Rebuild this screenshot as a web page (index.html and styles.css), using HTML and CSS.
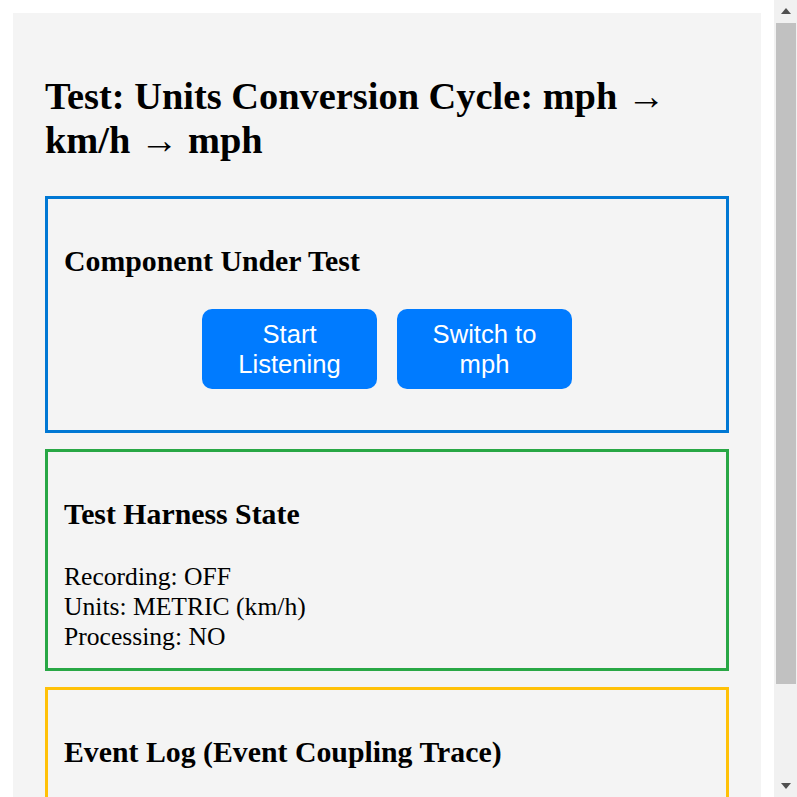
FILE: index.html
```html
<!DOCTYPE html>
<html lang="en">
<head>
<meta charset="utf-8">
<title>Units Conversion Cycle Test</title>
<link rel="stylesheet" href="styles.css">
</head>
<body>
<div class="page">
  <div class="container">
    <h1 class="title">Test: Units Conversion Cycle: mph → km/h → mph</h1>
    <section class="panel panel-component">
      <h2 class="panel-title">Component Under Test</h2>
      <div class="controls">
        <button class="btn">Start Listening</button>
        <button class="btn">Switch to mph</button>
      </div>
    </section>
    <section class="panel panel-state">
      <h2 class="panel-title">Test Harness State</h2>
      <div class="state">
        <div>Recording: OFF</div>
        <div>Units: METRIC (km/h)</div>
        <div>Processing: NO</div>
      </div>
    </section>
    <section class="panel panel-log">
      <h2 class="panel-title">Event Log (Event Coupling Trace)</h2>
      <div class="log"></div>
    </section>
  </div>
</div>
<div class="scrollbar" aria-hidden="true">
  <div class="sb-btn"><span class="arrow-up"></span></div>
  <div class="sb-track"><div class="sb-thumb"></div></div>
  <div class="sb-btn"><span class="arrow-down"></span></div>
</div>
</body>
</html>
```
FILE: styles.css
```css
html, body {
  margin: 0;
  padding: 0;
  height: 100%;
  overflow: hidden;
  background: #ffffff;
}
body {
  font-family: "Liberation Serif", "Times New Roman", serif;
  font-size: 25.6px;
  color: #000;
}
.page {
  margin-right: 23px;
}
.container {
  margin: 13px;
  padding: 32px;
  background: #f4f4f4;
}
.title {
  font-size: 38.4px;
  font-weight: bold;
  line-height: 1.15;
  margin: 29px 0 34px;
}
.panel {
  border: 3px solid #0078d4;
  padding: 16px;
}
.panel + .panel {
  margin-top: 16px;
}
.panel-component { border-color: #0078d4; }
.panel-state { border-color: #28a745; }
.panel-log { border-color: #ffc107; }
.panel-title {
  font-size: 29.8px;
  font-weight: bold;
  line-height: 34px;
  margin: 29px 0 31px;
}
.controls {
  display: flex;
  justify-content: center;
  gap: 20px;
  margin: 0 0 25px;
}
.btn {
  width: 175px;
  padding: 10px 16px;
  border: none;
  border-radius: 10px;
  background: #007bff;
  color: #fff;
  font-family: "Liberation Sans", Arial, sans-serif;
  font-size: 25.6px;
  line-height: 30px;
}
.state {
  line-height: 30px;
  margin-bottom: 0;
}
.log {
  height: 53px;
}

/* scrollbar drawn over the right edge */
.scrollbar {
  position: fixed;
  top: 0;
  right: 0;
  width: 23px;
  height: 100%;
  display: flex;
  flex-direction: column;
  background: #f1f1f1;
}
.sb-btn {
  height: 22px;
  flex: none;
  display: flex;
  align-items: center;
  justify-content: center;
}
.arrow-up {
  width: 0;
  height: 0;
  border-left: 5px solid transparent;
  border-right: 5px solid transparent;
  border-bottom: 6px solid #505050;
}
.arrow-down {
  width: 0;
  height: 0;
  border-left: 5px solid transparent;
  border-right: 5px solid transparent;
  border-top: 6px solid #505050;
}
.sb-track {
  flex: 1;
  padding: 1px 1px 0 2px;
}
.sb-thumb {
  height: 661px;
  background: #c1c1c1;
}
```
